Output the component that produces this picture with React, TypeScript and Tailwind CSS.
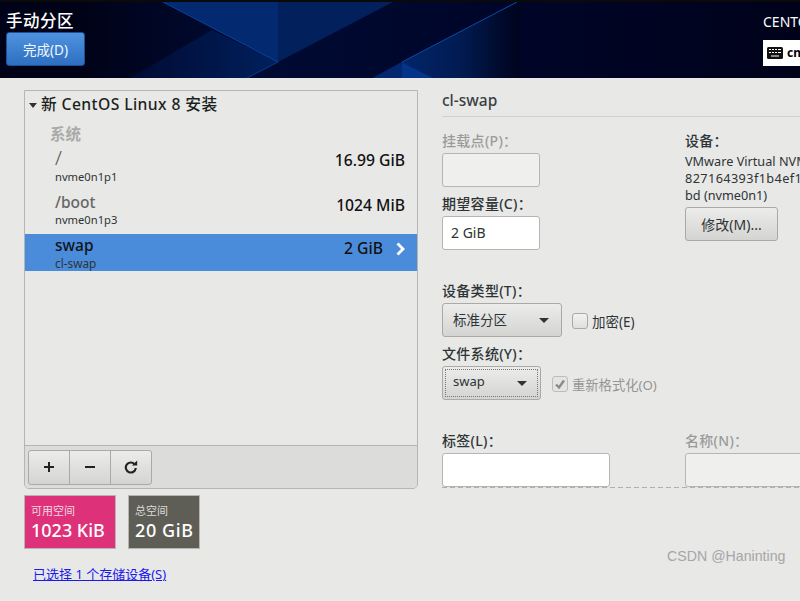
import React from 'react';

const font = "font-['Noto_Sans','Noto_Sans_CJK_SC',sans-serif]";
const btnGrad = 'bg-gradient-to-b from-[#ececeb] to-[#d4d4d2] border border-[#a9a9a7] rounded-[3px]';

interface RowProps {
  name: string;
  dev: string;
  size: string;
  selected?: boolean;
  h: string;
  nameCls: string;
  devCls?: string;
  sizeCls: string;
}

const Row: React.FC<RowProps> = ({ name, dev, size, selected, h, nameCls, devCls, sizeCls }) => (
  <div className={`${h} flex justify-between pl-[30px] pr-3 ${selected ? 'bg-[#4a8cd9]' : ''} text-[#2e3436]`}>
    <div className="flex flex-col">
      <span className={`leading-[20px] ${nameCls}`}>{name}</span>
      <span className={`text-[11.2px] leading-[14px] ${devCls ?? ''}`}>{dev}</span>
    </div>
    <div className="flex items-start">
      <span className={`text-[15.7px] font-medium leading-[20px] text-[#111] ${sizeCls}`}>{size}</span>
      {selected && (
        <svg width="9" height="14" viewBox="0 0 9 14" className="ml-[13px] mt-[8px]">
          <path d="M1.5 1.5 L7 7 L1.5 12.5" fill="none" stroke="#fff" strokeWidth="2.8" />
        </svg>
      )}
    </div>
  </div>
);

const Label: React.FC<{ children: React.ReactNode; off?: boolean; cls?: string }> = ({ children, off, cls }) => (
  <div className={`text-[14px] font-medium leading-[18px] tracking-[0.3px] ${off ? 'text-[#9b9b9b]' : 'text-[#2e3436]'} ${cls ?? ''}`}>{children}</div>
);

const Caret = () => <span className="w-0 h-0 border-x-[5px] border-x-transparent border-t-[5px] border-t-[#2e3436]" />;

const HeaderArt = () => (
  <svg className="absolute inset-0" width="800" height="76" viewBox="0 2 800 76">
    <defs>
      <linearGradient id="bgFade" x1="0" x2="1" y1="0" y2="0">
        <stop offset="0" stopColor="#000318" />
        <stop offset="0.11" stopColor="#000318" />
        <stop offset="0.3" stopColor="#000a33" />
        <stop offset="0.6" stopColor="#00062a" />
        <stop offset="1" stopColor="#00021a" />
      </linearGradient>
      <linearGradient id="lowFade" x1="130" x2="278" y1="0" y2="0" gradientUnits="userSpaceOnUse">
        <stop offset="0" stopColor="#000a33" />
        <stop offset="1" stopColor="#01205c" />
      </linearGradient>
      <linearGradient id="rightFade" x1="400" x2="520" y1="0" y2="0" gradientUnits="userSpaceOnUse">
        <stop offset="0" stopColor="#02266a" />
        <stop offset="0.5" stopColor="#011b52" />
        <stop offset="1" stopColor="#00031c" />
      </linearGradient>
    </defs>
    <rect x="0" y="0" width="800" height="78" fill="url(#bgFade)" />
    <polygon points="130,78 212,30 278,62 247,78" fill="url(#lowFade)" />
    <polygon points="163,2 278,2 278,62" fill="#032a70" />
    <polygon points="278,2 393,2 278,62" fill="#02205c" />
    <polygon points="402,62 517,2 520,2 520,78 433,78" fill="url(#rightFade)" />
    <polygon points="402,62 433,78 373,78" fill="#03348a" />
    <polygon points="402,62 402,78 373,78" fill="#022670" />
    <line x1="163" y1="2" x2="278" y2="62" stroke="#07449c" strokeWidth="1" />
    <line x1="278" y1="62" x2="247" y2="78" stroke="#063a8c" strokeWidth="1" />
    <line x1="402" y1="62" x2="517" y2="2" stroke="#0a4ca8" strokeWidth="1" />
  </svg>
);

export default function App() {
  return (
    <div className={`w-[800px] h-[601px] overflow-hidden relative bg-[#e8e8e7] ${font}`}>
      {/* Header */}
      <div className="h-[78px] relative overflow-hidden border-t-2 border-t-[#0a0a0a]">
        <HeaderArt />
        <div className="relative pl-[6px] pt-[9px]">
          <div className="text-white text-[16.5px] font-medium leading-[20px] tracking-[0.5px]">手动分区</div>
          <button className="block w-[79px] h-[34px] mt-[1px] pt-[2px] rounded-[3px] border border-[#1d4f94] bg-gradient-to-b from-[#4f93e0] to-[#2d6fc0] text-[#f4f8fd] text-[13.5px]">完成(D)</button>
        </div>
        <div className="absolute left-[763px] top-[11px] flex flex-col">
          <span className="text-white text-[14px] leading-[18px] whitespace-nowrap">CENTOS LINUX 8 安装</span>
          <div className="w-[200px] h-[26px] mt-[9px] bg-white flex items-center pl-[4px] gap-[4px] text-[12px] font-bold text-black">
            <svg width="16" height="12" viewBox="0 0 16 12">
              <rect x="0" y="0" width="16" height="12" rx="1.5" fill="#111" />
              <path d="M2 2.5h2M5 2.5h2M8 2.5h2M11 2.5h3M2 5.5h2M5 5.5h2M8 5.5h2M11 5.5h3M4 9h8" stroke="#fff" strokeWidth="1.2" />
            </svg>
            <span>cn</span>
          </div>
        </div>
      </div>

      {/* Body */}
      <div className="flex items-start">
        {/* Left column */}
        <div className="ml-6 mt-3 w-[394px] flex flex-col">
          <div className="h-[399px] border border-[#b5b5b3] rounded-b-[5px] flex flex-col overflow-hidden">
            <div className="h-[26px] pt-[2px] flex items-center pl-[4px] gap-[4px] text-[15.7px] font-medium text-[#1c1f20] tracking-[0.4px]">
              <span className="w-0 h-0 border-x-[4px] border-x-transparent border-t-[5px] border-t-[#2e3436]" />
              <span>新 CentOS Linux 8 安装</span>
            </div>
            <div className="h-[21px] mt-[5px] pl-[25px] text-[15.5px] font-bold leading-[24px] text-[#aaa]">系统</div>
            <Row name="/" dev="nvme0n1p1" size="16.99 GiB" h="h-[45px]" nameCls="text-[20px] font-light text-[#555] h-[27px] leading-[30px]" sizeCls="mt-[7px]" />
            <Row name="/boot" dev="nvme0n1p3" size="1024 MiB" h="h-[46px]" nameCls="text-[15.5px] font-medium text-[#666] mt-[4px]" devCls="mt-[1px]" sizeCls="mt-[7px]" />
            <Row name="swap" dev="cl-swap" size="2 GiB" selected h="h-[37px]" nameCls="text-[15.5px] font-medium text-[#10141a] mt-[1px]" devCls="mt-[1px] text-[11.8px]" sizeCls="mt-[4px]" />
            <div className="flex-1" />
            <div className="h-[43px] border-t border-[#b5b5b3] bg-[#dcdcda] flex items-center pl-[3px]">
              <div className={`flex h-[35px] w-[124px] ${btnGrad} text-[#2e3436]`}>
                <div className="flex-1 flex items-center justify-center border-r border-[#a9a9a7]">
                  <svg width="12" height="12" viewBox="0 0 12 12"><path d="M6 1v10M1 6h10" stroke="#222" strokeWidth="2" /></svg>
                </div>
                <div className="flex-1 flex items-center justify-center border-r border-[#a9a9a7]">
                  <svg width="12" height="12" viewBox="0 0 12 12"><path d="M1 6h10" stroke="#222" strokeWidth="2" /></svg>
                </div>
                <div className="flex-1 flex items-center justify-center">
                  <svg width="14" height="14" viewBox="0 0 14 14">
                    <path d="M10.6 4.2A5 5 0 1 0 11.8 8" fill="none" stroke="#222" strokeWidth="2.2" />
                    <path d="M8 5.6h5.2V0.6z" fill="#222" />
                  </svg>
                </div>
              </div>
            </div>
          </div>
          <div className="flex gap-3 mt-[6px]">
            <div className="w-[92px] h-[54px] bg-[#dd3279] border border-[#b5b5b3] text-white px-[6px] pt-2">
              <div className="text-[11px] leading-[14px] text-[#f6d5e3]">可用空间</div>
              <div className="text-[18px] font-medium leading-[24px] whitespace-nowrap">1023 KiB</div>
            </div>
            <div className="w-[72px] h-[54px] bg-[#5e5e56] border border-[#b5b5b3] text-white px-[6px] pt-2">
              <div className="text-[11px] leading-[14px] text-[#dcdcd8]">总空间</div>
              <div className="text-[18px] font-medium leading-[24px] tracking-[0.6px] whitespace-nowrap">20 GiB</div>
            </div>
          </div>
          <a className="ml-[9px] mt-[16px] text-[13px] leading-[18px] text-[#1a1aee] underline whitespace-nowrap">已选择 1 个存储设备(S)</a>
        </div>

        {/* Right column */}
        <div className="ml-6 w-[358px] overflow-hidden shrink-0 text-[#2e3436]">
          <div className="h-[39px] pt-[11px] border-b border-[#cfcfcd] text-[15.5px] font-medium leading-[22px] text-[#3a3f41]">cl-swap</div>
          <div className="flex mt-[15px]">
            <div className="w-[243px] shrink-0">
              <Label off>挂载点(P)：</Label>
              <div className="w-[98px] h-[34px] mt-[3px] rounded-[3px] border border-[#b5b5b3] bg-[#efefee]" />
              <Label cls="mt-[8px]">期望容量(C)：</Label>
              <div className="w-[98px] h-[34px] mt-[3px] rounded-[3px] border border-[#b5b5b3] bg-white pl-[8px] text-[14px] leading-[32px]">2 GiB</div>
            </div>
            <div className="w-[200px] shrink-0">
              <Label>设备：</Label>
              <div className="text-[12.7px] leading-[17px] mt-[3px] whitespace-nowrap">VMware Virtual NVMe Disk</div>
              <div className="text-[12.7px] leading-[17px] whitespace-nowrap tracking-[0.4px]">827164393f1b4ef1a0c5e7</div>
              <div className="text-[12.7px] leading-[17px]">bd (nvme0n1)</div>
              <button className={`block w-[93px] h-[34px] mt-[3px] text-[14px] ${btnGrad}`}>修改(M)...</button>
            </div>
          </div>

          <Label cls="mt-[32px]">设备类型(T)：</Label>
          <div className="flex items-center mt-[3px]">
            <div className={`w-[120px] h-[34px] ${btnGrad} flex items-center justify-between pl-[10px] pr-[12px] text-[13.5px]`}>
              <span>标准分区</span><Caret />
            </div>
            <span className="w-4 h-4 ml-[10px] mt-[2px] rounded-[3px] border border-[#a9a9a7] bg-gradient-to-b from-[#f2f2f1] to-[#dfdfde]" />
            <span className="ml-[4px] mt-[5px] text-[13.5px]">加密(E)</span>
          </div>
          <Label cls="mt-[8px]">文件系统(Y)：</Label>
          <div className="flex items-center mt-[3px]">
            <div className={`w-[99px] h-[34px] ${btnGrad} p-[2px]`}>
              <div className="h-full border border-dotted border-[#777] flex items-center justify-between pl-[7px] pr-[10px] text-[13px]">
                <span className="-mt-[2px]">swap</span><Caret />
              </div>
            </div>
            <span className="w-4 h-4 ml-[11px] mt-[2px] rounded-[3px] border border-[#bdbdbb] bg-[#e4e4e3] flex items-center justify-center text-[#8a8a8a]">
              <svg width="12" height="12" viewBox="0 0 12 12"><path d="M2 6.5 L5 9.5 L10 2.5" fill="none" stroke="currentColor" strokeWidth="2.4" /></svg>
            </span>
            <span className="ml-[4px] mt-[5px] text-[13.3px] text-[#959595]">重新格式化(O)</span>
          </div>

          <div className="flex mt-[32px]">
            <div className="w-[243px] shrink-0">
              <Label>标签(L)：</Label>
              <div className="w-[168px] h-[34px] mt-[3px] rounded-[3px] border border-[#b5b5b3] bg-white" />
            </div>
            <div className="w-[200px] shrink-0">
              <Label off>名称(N)：</Label>
              <div className="w-[200px] h-[34px] mt-[3px] rounded-[3px] border border-[#b5b5b3] bg-[#efefee]" />
            </div>
          </div>
          <div className="h-px bg-[repeating-linear-gradient(90deg,#b0b0ae_0_5px,transparent_5px_8px)]" />
        </div>
      </div>

      {/* Watermark */}
      <span className="absolute left-[667px] top-[547px] font-['Liberation_Sans',sans-serif] text-[14.2px] leading-[18px] text-[#a6a6a6]">CSDN @Haninting</span>
    </div>
  );
}
